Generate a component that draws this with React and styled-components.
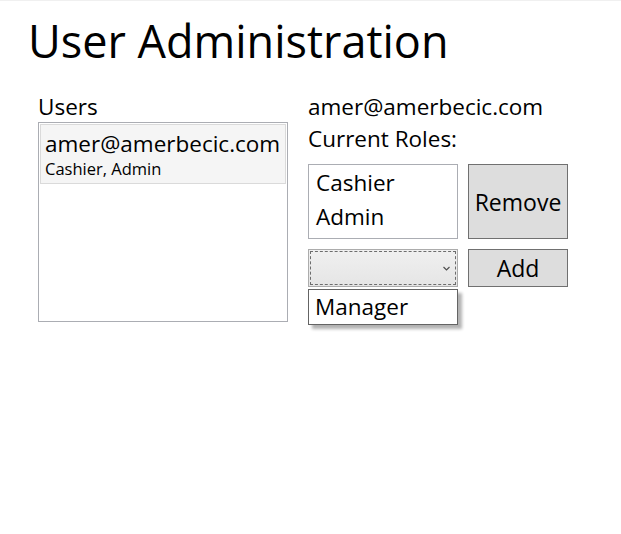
import React from 'react';
import styled, { createGlobalStyle } from 'styled-components';

const GlobalStyle = createGlobalStyle`
    html, body {
        margin: 0;
        padding: 0;
        background: #ffffff;
    }
    body {
        font-family: 'Segoe UI', 'Open Sans', 'Noto Sans', sans-serif;
        color: #000000;
    }
`;

const Window = styled.div`
    width: 621px;
    height: 534px;
    border-top: 1px solid #f0f0f0;
    box-sizing: border-box;
    padding: 9px 0 0 28px;
`;

const Title = styled.h1`
    margin: 0;
    font-size: 45px;
    font-weight: 400;
    line-height: 62px;
`;

const Columns = styled.div`
    display: flex;
    gap: 20px;
    margin: 18px 0 0 10px;
`;

const Column = styled.div`
    display: flex;
    flex-direction: column;
    width: ${props => props.width}px;
`;

const Label = styled.div`
    box-sizing: border-box;
    font-size: 22.5px;
    line-height: 30px;
    padding-top: 2px;
    height: ${props => props.height || 32}px;
`;

const ListBox = styled.div`
    box-sizing: border-box;
    width: ${props => props.width}px;
    height: ${props => props.height}px;
    border: 1px solid #abadb3;
    background: #ffffff;
    padding: 1px;
`;

const UserItem = styled.div`
    box-sizing: border-box;
    height: 60px;
    background: #f5f5f5;
    border: 1px solid #dadada;
    padding: 3px 0 0 4px;
`;

const UserEmail = styled.div`
    font-size: 22.5px;
    line-height: 31px;
`;

const UserRoles = styled.div`
    font-size: 16.5px;
    line-height: 20px;
`;

const RoleItem = styled.div`
    font-size: 22.5px;
    line-height: 34px;
    padding-left: 6px;
`;

const Row = styled.div`
    display: flex;
    gap: 10px;
    margin-top: ${props => props.top || 0}px;
`;

const Button = styled.button`
    box-sizing: border-box;
    width: 100px;
    height: ${props => props.height}px;
    background: #dddddd;
    border: 1px solid #707070;
    font-family: inherit;
    font-size: 23px;
    color: #000000;
    padding: 0;
`;

const ComboWrap = styled.div`
    position: relative;
    width: 150px;
`;

const Combo = styled.div`
    box-sizing: border-box;
    width: 150px;
    height: 38px;
    border: 1px solid #acacac;
    background: linear-gradient(#f0f0f0, #e5e5e5);
    padding: 1px;
`;

const FocusRing = styled.div`
    box-sizing: border-box;
    height: 100%;
    border: 1px dashed #6d6d6d;
    display: flex;
    align-items: center;
    justify-content: flex-end;
    padding-right: 5px;
`;

const Popup = styled.div`
    position: absolute;
    top: 40px;
    left: 0;
    box-sizing: border-box;
    width: 150px;
    height: 36px;
    background: #ffffff;
    border: 1px solid #646464;
    box-shadow: 4px 4px 3px rgba(0, 0, 0, 0.3);
    font-size: 22.5px;
    line-height: 34px;
    padding-left: 6px;
`;

const Chevron = () => (
    <svg width="7" height="5" viewBox="0 0 7 5">
        <path d="M0.5 1 L3.5 4 L6.5 1" fill="none" stroke="#505050" strokeWidth="1.2" />
    </svg>
);

const App = () => {
    return (
        <>
            <GlobalStyle />
            <Window>
                <Title>User Administration</Title>
                <Columns>
                    <Column width={250}>
                        <Label>Users</Label>
                        <ListBox width={250} height={200}>
                            <UserItem>
                                <UserEmail>amer@amerbecic.com</UserEmail>
                                <UserRoles>Cashier, Admin</UserRoles>
                            </UserItem>
                        </ListBox>
                    </Column>
                    <Column width={260}>
                        <Label>amer@amerbecic.com</Label>
                        <Label height={42}>Current Roles:</Label>
                        <Row>
                            <ListBox width={150} height={75}>
                                <RoleItem>Cashier</RoleItem>
                                <RoleItem>Admin</RoleItem>
                            </ListBox>
                            <Button height={75}>Remove</Button>
                        </Row>
                        <Row top={10}>
                            <ComboWrap>
                                <Combo>
                                    <FocusRing>
                                        <Chevron />
                                    </FocusRing>
                                </Combo>
                                <Popup>Manager</Popup>
                            </ComboWrap>
                            <Button height={38}>Add</Button>
                        </Row>
                    </Column>
                </Columns>
            </Window>
        </>
    );
};

export default App;
